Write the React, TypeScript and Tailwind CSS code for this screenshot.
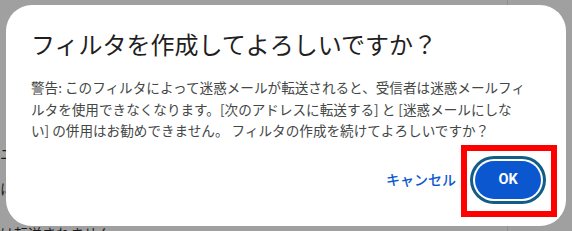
import React from "react";

const jp = { fontFamily: '"Noto Sans CJK JP", "Noto Sans", sans-serif' };

export default function App() {
  return (
    <div
      className="relative w-[572px] h-[231px] overflow-hidden bg-[#a0a0a0]"
      style={jp}
    >
      {/* page behind the scrim */}
      <div className="flex h-full">
        <div className="flex flex-col pt-[143px] text-[14px] leading-[20px] text-[#1a1a1a] whitespace-nowrap w-[507px]">
          <div>ニ</div>
          <div className="mt-[15px]">に</div>
          <div className="mt-[25px]">は転送されません</div>
        </div>
        <div className="w-px h-full bg-[#8e8e8e]" />
      </div>

      {/* dialog */}
      <div className="absolute left-[6px] top-[5px] w-[560px] h-[221px] rounded-[26px] bg-white flex flex-col pl-[25px] pr-[25px] pt-[23px]">
        <h1 className="text-[24px] leading-[32px] text-[#1f1f1f] font-normal whitespace-nowrap">
          フィルタを作成してよろしいですか？
        </h1>
        <p className="mt-[17px] text-[13.6px] leading-[21.5px] text-[#444746] whitespace-nowrap">
          警告: このフィルタによって迷惑メールが転送されると、受信者は迷惑メールフィ
          <br />
          ルタを使用できなくなります。[次のアドレスに転送する] と [迷惑メールにしな
          <br />
          い] の併用はお勧めできません。 フィルタの作成を続けてよろしいですか？
        </p>
        <div className="mt-[19px] flex items-center justify-end">
          <button className="h-[38px] px-[12px] text-[14px] font-medium text-[#0b57d0]">
            キャンセル
          </button>
          <div className="relative ml-[7px]">
            <button
              className="w-[66px] h-[38px] rounded-full bg-[#0b57d0] text-white text-[14.5px] font-bold shadow-[0_0_0_2px_#ffffff,0_0_0_5px_#125c88]"
              style={{ fontFamily: 'Roboto, "Liberation Sans", sans-serif' }}
            >
              OK
            </button>
            <div className="absolute -left-[14px] -right-[16px] -top-[16px] -bottom-[18px] border-[6px] border-[#ff0000] pointer-events-none" />
          </div>
        </div>
      </div>
    </div>
  );
}
